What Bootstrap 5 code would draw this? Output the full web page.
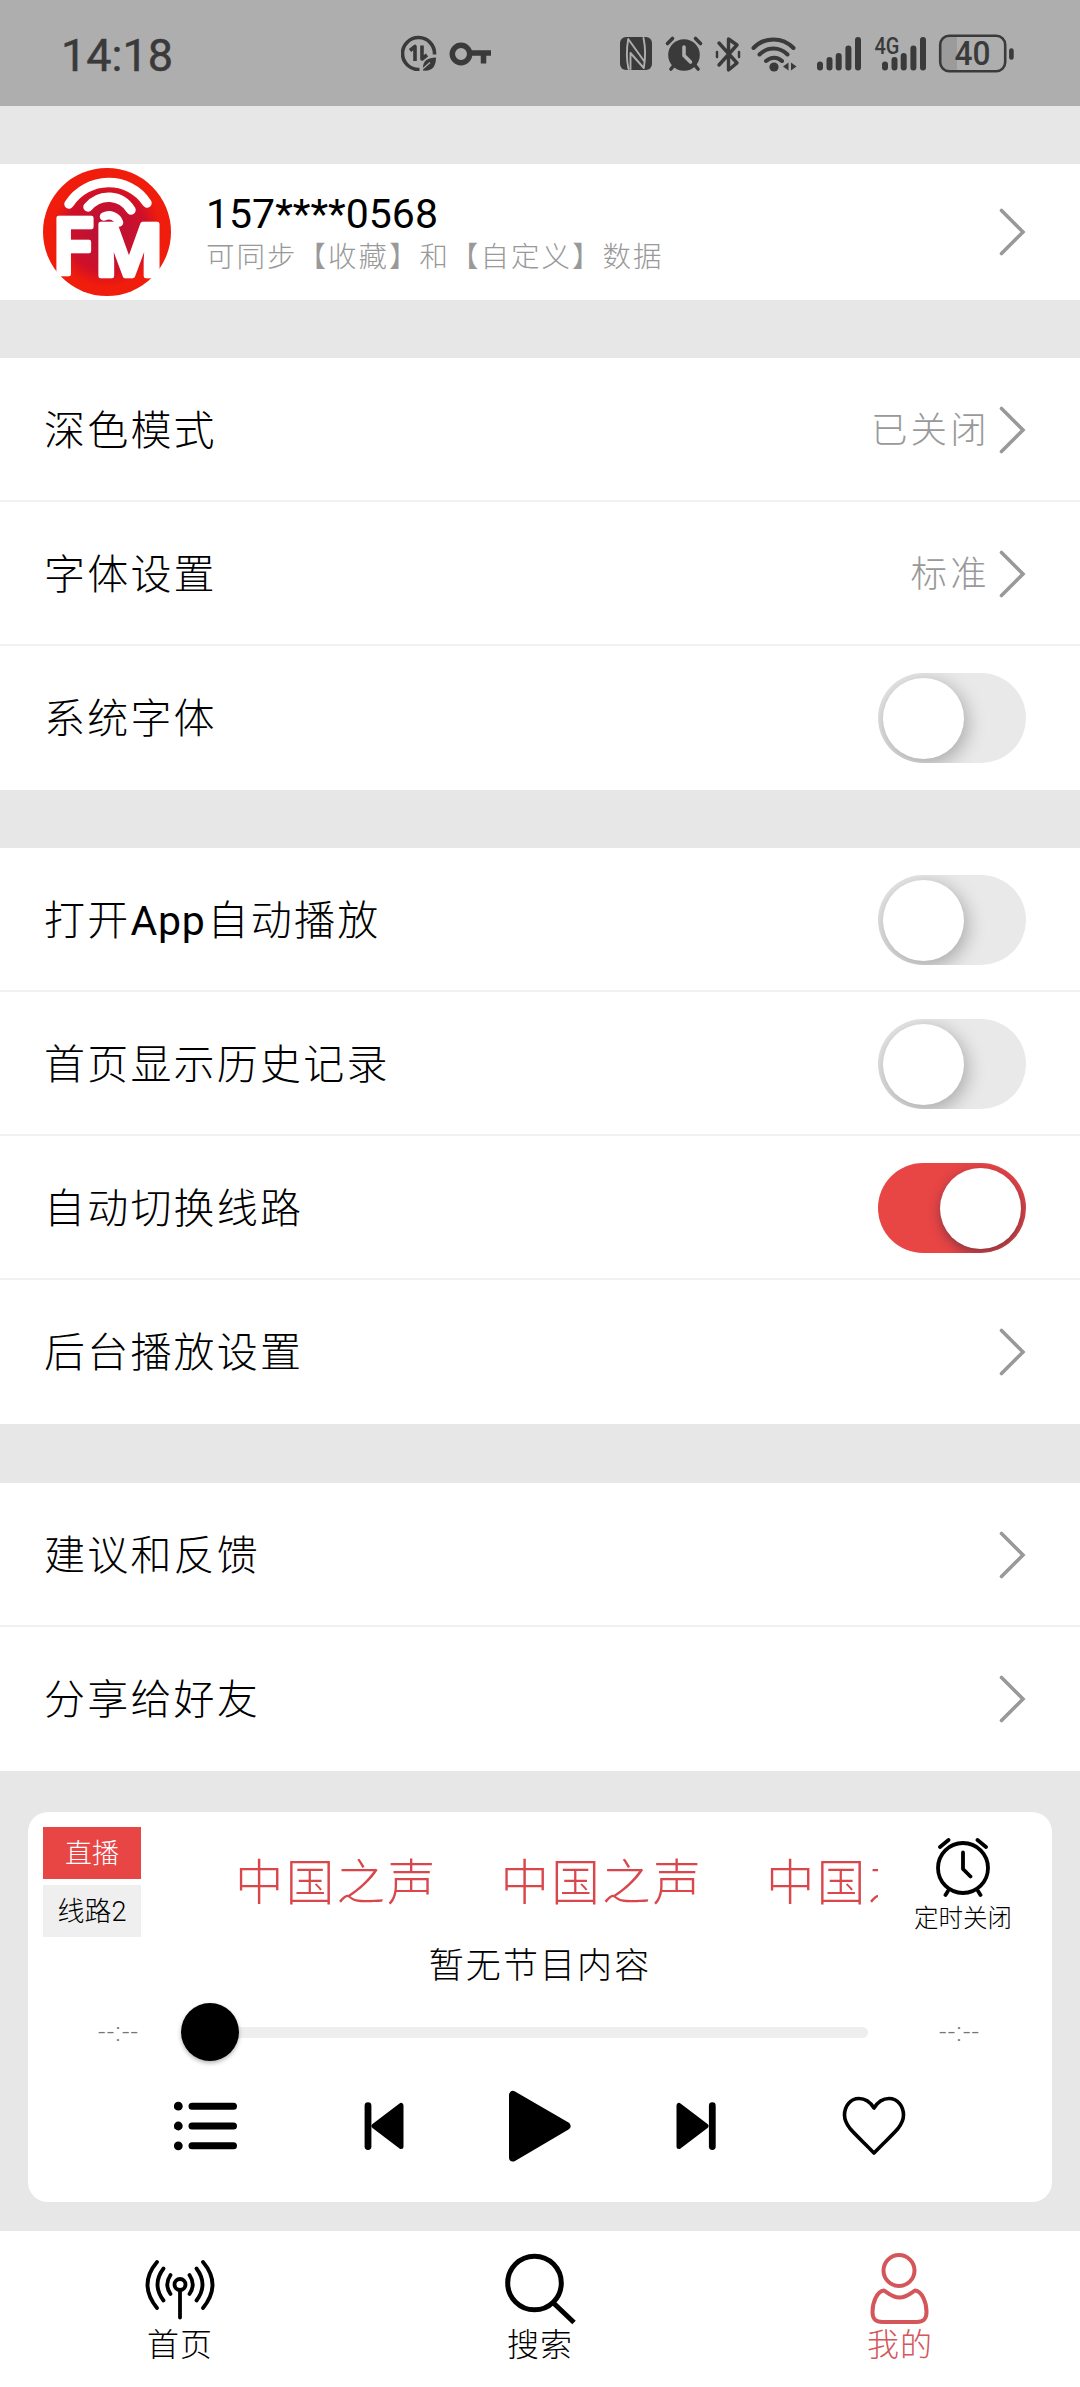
<!DOCTYPE html>
<html lang="zh-CN">
<head>
<meta charset="utf-8">
<meta name="viewport" content="width=device-width, initial-scale=1">
<title>我的</title>
<link rel="stylesheet" href="https://cdn.jsdelivr.net/npm/bootstrap@5.3.0/dist/css/bootstrap.min.css">
<style>
  :root { --brand: #e84545; --tint: #d4565a; --page: #e7e7e7; --muted: #999; }
  body { background: var(--page); color: #000; font-family: Roboto, "Noto Sans CJK SC", sans-serif; font-weight: 300; line-height: 1; width: 1080px; height: 2387px; overflow: hidden; }
  svg { display: block; flex: none; }
  .statusbar { height: 106px; background: #aeaeae; padding: 0 65px 0 61px; color: #3a3a3a; }
  .clock { font-size: 45px; font-weight: 400; letter-spacing: 0; width: 341px; padding-top: 4px; -webkit-text-stroke: .5px #3a3a3a; }
  .sys-left { margin-left: 2px; }
  .sys-right { margin-left: 126px; }
  .group { --bs-list-group-bg: #fff; --bs-list-group-color: #000; --bs-list-group-border-color: #f1f1f1; --bs-list-group-border-radius: 0; }
  .group .list-group-item { height: 144px; padding: 2px 54px 0 44px; border-width: 0 0 2px; }
  .group .list-group-item:last-child { border-bottom-color: #fff; }
  .item-label { font-size: 41px; letter-spacing: 2.2px; white-space: nowrap; padding-top: 3px; }
  .latin { font-weight: 400; letter-spacing: .8px; margin-right: 2px; }
  .item-value { font-size: 36.5px; letter-spacing: 3.2px; color: var(--muted); margin-right: 9px; padding-top: 2px; }
  .gap-block { height: 58px; }
  .profile { height: 136px; padding: 0 54px 0 43px; }
  .phone { font-size: 41px; font-weight: 400; margin-bottom: 9px; padding-top: 3px; }
  .hint { font-size: 28.5px; letter-spacing: 2px; color: var(--muted); white-space: nowrap; }
  .group .form-switch { padding: 0; min-height: 0; margin: 0; }
  .group .form-check-input { position: relative; display: block; float: none; margin: 0; width: 148px; height: 90px; border: 0; border-radius: 45px; background: #e9e9e9; overflow: hidden; }
  .group .form-check-input::before { content: ""; position: absolute; left: 4.5px; top: 4.5px; width: 81px; height: 81px; border-radius: 50%; background: #fff; box-shadow: 2px 5px 18px 2px rgba(0,0,0,.26); }
  .group .form-check-input:checked { background: var(--brand); }
  .group .form-check-input:checked::before { left: 62px; box-shadow: 1px 4px 12px rgba(60,40,60,.6); }
  .player { width: 1024px; height: 390px; margin: 41px auto 0; border: 0; border-radius: 20px; padding: 15px 15px 0; --bs-card-bg: #fff; color: #000; }
  .player-top { height: 122px; }
  .tag { width: 98px; height: 52px; font-size: 27px; border-radius: 0; padding: 3px 0 0; }
  .tag-live { background: var(--brand); color: #fff; margin-bottom: 6px; }
  .tag-line { background: #efefef; }
  .ticker { width: 677px; margin-left: 60px; overflow: hidden; white-space: nowrap; padding-left: 34px; margin-top: 14px; height: 88px; font-size: 48.5px; letter-spacing: 2.2px; color: #d9474d; }
  .ticker span { flex: none; width: 265.5px; line-height: 86px; }
  .timer { width: 110px; margin-left: 30px; padding-top: 11px; font-size: 24.5px; white-space: nowrap; }
  .programme { font-size: 35px; letter-spacing: 2.1px; height: 40px; line-height: 40px; margin-top: -2px; }
  .seek { height: 60px; margin-top: 15px; }
  .seek-time { font-size: 26px; width: 108px; color: #777; padding-left: 55px; letter-spacing: 1.2px; white-space: nowrap; }
  .seek-end { padding-left: 41px; margin-left: 27px; }
  .track { width: 690px; height: 58px; margin-left: 30px; }
  .bar { height: 11px; background: #eee; border-radius: 6px; margin-left: 29px; width: 658px; }
  .knob { left: 0; top: 0; width: 58px; height: 58px; background: #000; box-shadow: 0 2px 4px rgba(0,0,0,.3); }
  .controls { height: 72px; margin-top: 28px; padding-left: 131px; }
  .ctl-outer { margin-right: 126px; }
  .ctl-inner { margin-right: 105px; }
  .tabs { height: 156px; background: #fff; margin-top: 29px; }
  .tabs .nav-link { color: #000; padding: 22px 0 0; font-size: 32px; letter-spacing: 1px; }
  .tabs .nav-link.active { color: var(--tint); }
  .tabs svg { margin-bottom: 4px; }
</style>
</head>
<body>
<svg width="0" height="0" class="position-absolute" aria-hidden="true">
  <symbol id="chev" viewBox="0 0 27 50"><path d="M2.5 3.500 24 25 2.500 46.500" fill="none" stroke="#999" stroke-width="3.600" stroke-linecap="round" stroke-linejoin="miter"/></symbol>
</svg>

<header class="statusbar d-flex align-items-center">
  <div class="clock">14:18</div>
  <svg class="sys-left" width="92" height="36" viewBox="402 35.500 92 36" fill="none" stroke="#3a3a3a">
    <path d="M435.500 55A16 16 0 1 0 420.500 70" stroke-width="3.600"/>
    <path d="M411 51l5-4v14.500M423 46v13.500l5-4" stroke-width="3.600" stroke-linejoin="round"/>
    <path d="M424 71c-1-9 4-13 13-13 0 9-4 14-13 13Z" fill="#3a3a3a" stroke="none"/>
    <path d="M423 70l8-7" stroke="#aeaeae" stroke-width="1.300"/>
    <circle cx="462" cy="54.500" r="8.700" stroke-width="5.500"/>
    <path d="M471 53.500h21M484.500 53v11" stroke-width="5.500"/>
  </svg>
  <svg class="sys-right" width="396" height="40" viewBox="620 34 396 40" fill="none" stroke="#3a3a3a" stroke-linecap="round" stroke-linejoin="round">
    <rect x="621" y="38" width="32" height="33" rx="6" fill="#3a3a3a" stroke="none"/>
    <path d="M629.500 70c-2-9-2-20-.3-30l15.800 22M631.500 54v16M644.500 39c2 9 2 20 .3 30l-13.300-15" stroke="#aeaeae" stroke-width="1.900"/>
    <circle cx="685" cy="56" r="15.800" fill="#3a3a3a" stroke="none"/>
    <path d="M668.500 44.500l5-5M696.500 39.500l5 5M672 70l4-5M699 70l-4-5" stroke-width="3.600"/>
    <path d="M685 48v8.500l6.500 6.500" stroke="#aeaeae" stroke-width="3.600"/>
    <path d="M720 44l18 20-8.500 7V40l8.500 6-18 20" stroke-width="3.400"/>
    <path d="M718 53v5M740 53v5" stroke-width="2.500"/>
    <path d="M754.500 49c11-11.500 29-11.500 40 0M760.500 55.500c8-8 20-8 28 0M767 62c5-4.500 11.500-4.500 16 0" stroke-width="4"/>
    <circle cx="775" cy="68" r="4.600" fill="#3a3a3a" stroke="none"/>
    <path d="M789.500 63.500v8l-5.500-4ZM792 63.500v8l5.500-4Z" fill="#3a3a3a" stroke="none"/>
    <path d="M821 65.500v3M830.500 61v7.500M839.700 57v11.500M849.400 49.500v19M859 41v27.500" stroke-width="6"/>
    <path d="M886 65.500v3M895.500 61v7.500M904.700 57v11.500M914.400 49.500v19M924 41v27.500" stroke-width="6"/>
    <text x="875.500" y="54.500" font-size="23" font-weight="500" fill="#3a3a3a" stroke="none" textLength="25" lengthAdjust="spacingAndGlyphs">4G</text>
    <path d="M948 37h10v35h-10q-7 0-7-8V45q0-8 7-8Z" fill="#9b9b9b" stroke="none"/>
    <rect x="941.200" y="36.700" width="65" height="35.500" rx="9" stroke-width="2.600"/>
    <text x="955.500" y="66.300" font-size="32.500" font-weight="500" fill="#3a3a3a" stroke="none" textLength="36" lengthAdjust="spacingAndGlyphs">40</text>
    <path d="M1012.400 51.500v7" stroke-width="4.600"/>
  </svg>
</header>

<main>
  <div class="gap-block"></div>
  <section class="profile bg-white d-flex align-items-center">
    <svg width="128" height="128" viewBox="0 0 128 128">
      <defs>
        <radialGradient id="disc" cx=".5" cy=".5" r=".5"><stop offset="0" stop-color="#b51238"/><stop offset=".62" stop-color="#cf1029"/><stop offset=".85" stop-color="#f01c0c"/><stop offset="1" stop-color="#f01c0c"/></radialGradient>
      </defs>
      <circle cx="64" cy="64" r="64" fill="url(#disc)"/>
      <g fill="none" stroke="#fff" stroke-linecap="round" stroke-width="9.500">
        <path d="M26 36c18-28 60-29 78-1"/><path d="M45 39c12-14 33-13 43 3"/><path d="M61 48.500c6-3 13 0 15 6" stroke-width="8.500"/>
      </g>
      <g fill="#fff" stroke="#fff" stroke-width="4.500" stroke-linejoin="round" font-family="Roboto, sans-serif" font-weight="700">
        <text x="11" y="106" font-size="78" textLength="39" lengthAdjust="spacingAndGlyphs">F</text>
        <text x="53" y="108" font-size="72" textLength="66" lengthAdjust="spacingAndGlyphs">M</text>
      </g>
    </svg>
    <div class="flex-grow-1" style="padding-left:35px">
      <div class="phone">157****0568</div>
      <div class="hint">可同步【收藏】和【自定义】数据</div>
    </div>
    <svg width="27" height="50"><use href="#chev"/></svg>
  </section>

  <div class="gap-block"></div>
  <div class="list-group group">
    <div class="list-group-item d-flex align-items-center"><span class="item-label me-auto">深色模式</span><span class="item-value">已关闭</span><svg width="27" height="50"><use href="#chev"/></svg></div>
    <div class="list-group-item d-flex align-items-center"><span class="item-label me-auto">字体设置</span><span class="item-value">标准</span><svg width="27" height="50"><use href="#chev"/></svg></div>
    <div class="list-group-item d-flex align-items-center"><span class="item-label me-auto">系统字体</span><div class="form-check form-switch"><input class="form-check-input" type="checkbox" role="switch" aria-label="系统字体"></div></div>
  </div>

  <div class="gap-block"></div>
  <div class="list-group group">
    <div class="list-group-item d-flex align-items-center"><span class="item-label me-auto">打开<span class="latin">App</span>自动播放</span><div class="form-check form-switch"><input class="form-check-input" type="checkbox" role="switch" aria-label="打开App自动播放"></div></div>
    <div class="list-group-item d-flex align-items-center"><span class="item-label me-auto">首页显示历史记录</span><div class="form-check form-switch"><input class="form-check-input" type="checkbox" role="switch" aria-label="首页显示历史记录"></div></div>
    <div class="list-group-item d-flex align-items-center"><span class="item-label me-auto">自动切换线路</span><div class="form-check form-switch"><input class="form-check-input" type="checkbox" role="switch" checked aria-label="自动切换线路"></div></div>
    <div class="list-group-item d-flex align-items-center"><span class="item-label me-auto">后台播放设置</span><svg width="27" height="50"><use href="#chev"/></svg></div>
  </div>

  <div class="gap-block" style="height:59px"></div>
  <div class="list-group group">
    <div class="list-group-item d-flex align-items-center"><span class="item-label me-auto">建议和反馈</span><svg width="27" height="50"><use href="#chev"/></svg></div>
    <div class="list-group-item d-flex align-items-center"><span class="item-label me-auto">分享给好友</span><svg width="27" height="50"><use href="#chev"/></svg></div>
  </div>
</main>

<section class="card player">
  <div class="player-top d-flex align-items-start">
    <div>
      <div class="tag tag-live d-flex align-items-center justify-content-center">直播</div>
      <div class="tag tag-line d-flex align-items-center justify-content-center">线路2</div>
    </div>
    <div class="ticker d-flex"><span>中国之声</span><span>中国之声</span><span>中国之声</span></div>
    <div class="timer d-flex flex-column align-items-center">
      <svg width="56" height="60" viewBox="937 1838 56 60" fill="none" stroke="#000" stroke-width="3.800" stroke-linecap="round" stroke-linejoin="round">
        <circle cx="965" cy="1868" r="25"/><path d="M965 1852.500v16.500l7.500 7.500M942 1847l8.500-7M979.500 1840l8.500 7M950 1891l-2.500 4M980 1891l2.500 4"/>
      </svg>
      <div style="padding-top:9px">定时关闭</div>
    </div>
  </div>
  <div class="programme text-center">暂无节目内容</div>
  <div class="seek d-flex align-items-center">
    <div class="seek-time">--:--</div>
    <div class="track position-relative d-flex align-items-center"><div class="bar"></div><div class="knob position-absolute rounded-circle"></div></div>
    <div class="seek-time seek-end">--:--</div>
  </div>
  <div class="controls d-flex align-items-center">
    <svg class="ctl-outer" width="64" height="50" viewBox="174 2100.500 64 50"><g stroke="#000" stroke-width="7" stroke-linecap="round"><path d="M192 2105.700h41.500M192 2125.500h41.500M192 2145.300h41.500"/></g><circle cx="178.300" cy="2105.700" r="4.400"/><circle cx="178.300" cy="2125.500" r="4.400"/><circle cx="178.300" cy="2145.300" r="4.400"/></svg>
    <svg class="ctl-inner" width="40" height="48" viewBox="364 2101.500 40 48" stroke="#000" stroke-linejoin="round" stroke-linecap="round"><path d="M368 2105.200v40.800" stroke-width="6.800"/><path d="M374 2125.500l27-20.500v41Z" stroke-width="5"/></svg>
    <svg class="ctl-inner" width="62" height="72" viewBox="510 2089.500 62 72" stroke="#000" stroke-width="8" stroke-linejoin="round"><path d="M514 2094.500v62.500l53.500-31.500Z"/></svg>
    <svg class="ctl-outer" width="40" height="48" viewBox="676 2101.500 40 48" stroke="#000" stroke-linejoin="round" stroke-linecap="round"><path d="M712.300 2105.200v40.800" stroke-width="6.800"/><path d="M706 2125.500l-27-20.500v41Z" stroke-width="5"/></svg>
    <svg width="64" height="60" viewBox="843.500 2095.500 64 60" fill="none" stroke="#000" stroke-width="3.600" stroke-linejoin="round"><path d="M875.500 2107.500c-5-8-11-9.500-15-9.500-9 0-14.500 8-14.500 16.500 0 5 2 9 5.500 13.500 6 7 15 15 24 24.500 9-9.500 18-17.500 24-24.500 3.500-4.500 5.500-8.500 5.500-13.500 0-8.500-5.500-16.500-14.500-16.500-4 0-10 1.500-15 9.500Z"/></svg>
  </div>
</section>

<nav class="tabs nav nav-justified">
  <a class="nav-link d-flex flex-column align-items-center" href="#">
    <svg width="72" height="72" viewBox="144 2253 72 72" fill="none" stroke="#000" stroke-width="3.800" stroke-linecap="round"><circle cx="180" cy="2284.500" r="5.500"/><path d="M180 2291v26.500M170.500 2275q-6.500 9.500 0 19M189.500 2275q6.500 9.500 0 19M163.500 2268.500q-12 16 0 32M196.500 2268.500q12 16 0 32M157 2262q-19 22.500 0 46M203 2262q19 22.500 0 46"/></svg>
    首页
  </a>
  <a class="nav-link d-flex flex-column align-items-center" href="#">
    <svg width="72" height="72" viewBox="504 2253 72 72" fill="none" stroke="#000" stroke-width="5"><circle cx="534.500" cy="2283" r="26.800"/><path d="M553.500 2303l20.500 19.500"/></svg>
    搜索
  </a>
  <a class="nav-link active d-flex flex-column align-items-center" href="#">
    <svg width="72" height="72" viewBox="864.500 2253 72 72" fill="none" stroke="#d4565a" stroke-width="4" stroke-linejoin="round"><circle cx="899.500" cy="2270.500" r="15.500"/><path d="M884.500 2290.500c-7 1-11.500 11.500-11.500 21.500 0 7 3 10 10 10h34c7 0 10-3 10-10 0-10-4.500-20.500-11.500-21.500-3 1.500-8 7-15.500 7s-12.500-5.500-15.500-7Z"/></svg>
    我的
  </a>
</nav>
<script src="https://cdn.jsdelivr.net/npm/bootstrap@5.3.0/dist/js/bootstrap.bundle.min.js"></script>
</body>
</html>
